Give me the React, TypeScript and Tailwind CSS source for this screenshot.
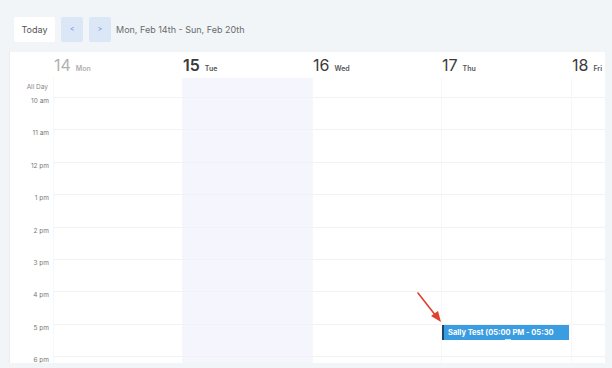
import React from "react";

const days = [
  { n: "14", d: "Mon", past: true, w: "w-[129px]" },
  { n: "15", d: "Tue", past: false, w: "w-[130px]" },
  { n: "16", d: "Wed", past: false, w: "w-[129px]" },
  { n: "17", d: "Thu", past: false, w: "w-[130px]" },
  { n: "18", d: "Fri", past: false, w: "w-[130px]" },
];

const hours = ["10 am", "11 am", "12 pm", "1 pm", "2 pm", "3 pm", "4 pm", "5 pm", "6 pm"];

export default function App() {
  return (
    <div
      className="relative w-[612px] h-[368px] overflow-hidden bg-[#f1f5f8]"
      style={{ fontFamily: "Inter, 'Liberation Sans', sans-serif" }}
    >
      {/* toolbar */}
      <div className="flex items-center h-[25px] mt-[17px] ml-[14px] gap-[6px]">
        <div className="h-[25px] w-[41px] bg-white rounded-[2px] flex items-center justify-center text-[9px] text-[#555]">
          Today
        </div>
        <div className="h-[25px] w-[22px] bg-[#dbe6f6] rounded-[2px] flex items-center justify-center text-[7px] text-[#5b8ad0]">
          &lt;
        </div>
        <div className="h-[25px] w-[22px] bg-[#dbe6f6] rounded-[2px] flex items-center justify-center text-[7px] text-[#5b8ad0]">
          &gt;
        </div>
        <div className="text-[9px] text-[#6b6b6b] ml-[-1px]">Mon, Feb 14th - Sun, Feb 20th</div>
      </div>

      {/* panel */}
      <div className="mt-[10px] ml-[9px] w-[596px] h-[311px] bg-white overflow-hidden border-l border-[#e9edf1]">
        {/* header */}
        <div className="flex h-[26px] w-[700px]">
          <div className="w-[43px] shrink-0" />
          {days.map((d) => (
            <div key={d.n} className={`${d.w} shrink-0 flex items-baseline pl-[1px] pt-[5px]`}>
              <span className={`text-[16px] leading-[16px] ${d.past ? "text-[#b0b0b0]" : "text-[#3a3a3a]"} ${d.n === "15" ? "font-semibold" : ""}`}>
                {d.n}
              </span>
              <span className={`ml-[5px] text-[7px] font-semibold ${d.past ? "text-[#b0b0b0]" : "text-[#555]"}`}>
                {d.d}
              </span>
            </div>
          ))}
        </div>
        {/* all day */}
        <div className="flex h-[19px] w-[700px]">
          <div className="w-[43px] shrink-0 flex items-center justify-end pr-[5px] text-[6.5px] text-[#888]">
            All Day
          </div>
          {days.map((d) => (
            <div
              key={d.n}
              className={`${d.w} shrink-0 border-l border-[#f6f7f9] ${d.n === "15" ? "bg-[#f5f6fd]" : ""}`}
            />
          ))}
        </div>
        {/* hours */}
        {hours.map((h) => (
          <div key={h} className="flex h-[32.4px] w-[700px]">
            <div className="w-[43px] shrink-0 flex justify-end pr-[4px] pt-[0px] text-[6.5px] leading-[8px] text-[#777]">
              {h}
            </div>
            {days.map((d) => (
              <div
                key={d.n}
                className={`relative ${d.w} shrink-0 border-t border-l border-t-[#f1f2f5] border-l-[#f6f7f9] ${d.n === "15" ? "bg-[#f5f6fd]" : ""}`}
              >
                {d.n === "17" && h === "5 pm" && (
                  <div className="absolute left-[0px] top-[0px] w-[127px] h-[15px] bg-[#3b9de1] border-l-[2px] border-[#22456a] flex items-center pl-[4px] overflow-hidden whitespace-nowrap text-[7.5px] font-bold text-white">
                    Sally Test (05:00 PM - 05:30
                    <div className="absolute left-[61px] bottom-[-1px] w-[6px] h-[2px] border-t border-b border-[#cfe6f7]" />
                  </div>
                )}
              </div>
            ))}
          </div>
        ))}
      </div>

      {/* red annotation arrow */}
      <svg className="absolute left-0 top-0" width="612" height="368" viewBox="0 0 612 368">
        <line x1="418" y1="293" x2="436" y2="316" stroke="#e0402c" strokeWidth="1.6" strokeLinecap="round" />
        <polygon points="441,322 431,316 438,311" fill="#e0402c" />
      </svg>
    </div>
  );
}
